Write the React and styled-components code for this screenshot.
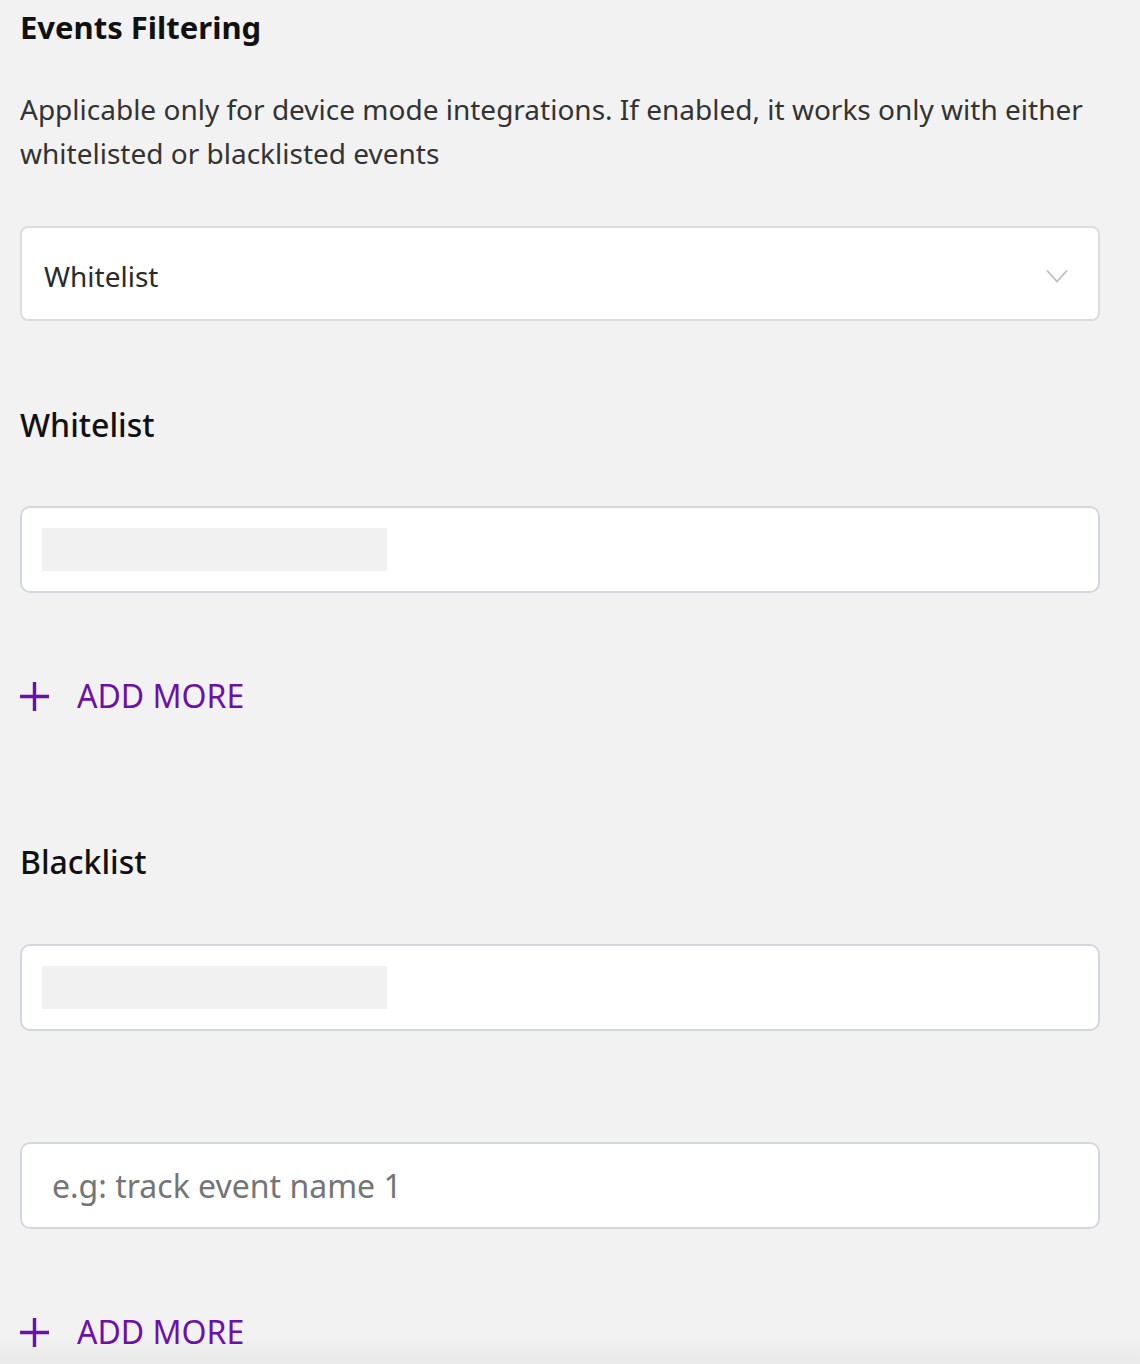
import React from "react";
import styled, { createGlobalStyle } from "styled-components";

const Global = createGlobalStyle`
  html, body { margin: 0; padding: 0; background: #f2f2f2; }
  body { font-family: "Noto Sans", "Open Sans", sans-serif; }
`;

const Page = styled.div`
  width: 1140px;
  min-height: 1364px;
  box-sizing: border-box;
  padding: 0 40px 0 20px;
  background: linear-gradient(to bottom, #f2f2f2 0, #f2f2f2 1335px, #e9e9e9 1364px);
  overflow: hidden;
`;

const Title = styled.h2`
  margin: 0;
  padding-top: 6px;
  font-size: 31px;
  line-height: 42px;
  font-weight: 700;
  color: #111;
`;

const Description = styled.p`
  margin: 39px 0 0;
  font-size: 28px;
  line-height: 44px;
  color: #333;
`;

const Select = styled.div`
  margin-top: 51px;
  height: 95px;
  box-sizing: border-box;
  border: 2px solid #dcdcdc;
  border-radius: 8px;
  background: #fff;
  display: flex;
  align-items: center;
  justify-content: space-between;
  padding: 4px 30px 0 22px;
  font-size: 28px;
  color: #2a2a2a;
`;

const Label = styled.div`
  margin-top: ${(p) => p.$mt}px;
  font-size: 32px;
  line-height: 40px;
  font-weight: 500;
  color: #111;
`;

const InputBox = styled.div`
  margin-top: ${(p) => p.$mt}px;
  height: 87px;
  box-sizing: border-box;
  border: 2px solid #d3d8df;
  border-radius: 10px;
  background: #fff;
  display: flex;
  align-items: center;
  padding: 0 30px;
  font-size: 32px;
  color: #757575;
`;

const Skeleton = styled.div`
  width: 345px;
  height: 43px;
  margin-left: -10px;
  background: #f1f1f1;
`;

const AddMore = styled.button`
  margin-top: ${(p) => p.$mt}px;
  border: 0;
  background: none;
  padding: 0;
  display: flex;
  align-items: center;
  gap: 28px;
  font-family: inherit;
  font-size: 32px;
  line-height: 40px;
  color: #6d10a9;
  cursor: pointer;
`;

const Chevron = () => (
  <svg width="22" height="14" viewBox="0 0 22 14" fill="none">
    <path d="M1 1.5 L11 12.5 L21 1.5" stroke="#bdbdbd" strokeWidth="1.8" />
  </svg>
);

const Plus = () => (
  <svg width="29" height="29" viewBox="0 0 29 29">
    <path d="M14.5 0 V29 M0 14.5 H29" stroke="#6d10a9" strokeWidth="3.4" />
  </svg>
);

export default function App() {
  return (
    <>
      <Global />
      <Page>
        <Title>Events Filtering</Title>
        <Description>
          Applicable only for device mode integrations. If enabled, it works only with either
          whitelisted or blacklisted events
        </Description>
        <Select>
          <span>Whitelist</span>
          <Chevron />
        </Select>
        <Label $mt={84}>Whitelist</Label>
        <InputBox $mt={61}>
          <Skeleton />
        </InputBox>
        <AddMore $mt={83}>
          <Plus />
          ADD MORE
        </AddMore>
        <Label $mt={126}>Blacklist</Label>
        <InputBox $mt={62}>
          <Skeleton />
        </InputBox>
        <InputBox $mt={111}>e.g: track event name 1</InputBox>
        <AddMore $mt={83}>
          <Plus />
          ADD MORE
        </AddMore>
      </Page>
    </>
  );
}
